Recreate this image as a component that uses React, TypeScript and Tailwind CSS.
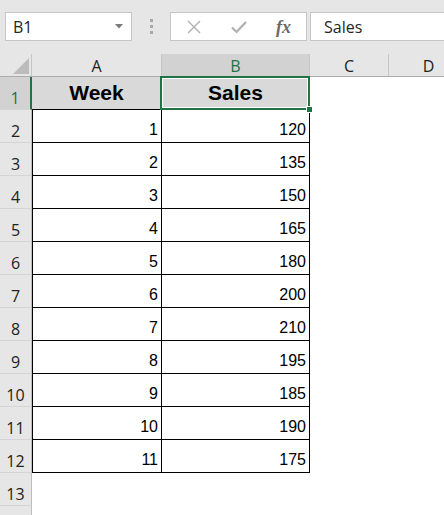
import React from "react";

const rows: [number, number][] = [
  [1, 120],
  [2, 135],
  [3, 150],
  [4, 165],
  [5, 180],
  [6, 200],
  [7, 210],
  [8, 195],
  [9, 185],
  [10, 190],
  [11, 175],
];

const ui = "font-['Open_Sans',sans-serif]";
const cell = "font-['Liberation_Sans',Arial,sans-serif]";

const RowHead = ({ n, active }: { n?: number; active?: boolean }) => (
  <div
    className={`w-[32px] h-[33px] shrink-0 flex items-end justify-center pb-[3px] border-b border-[#d4d4d4] ${
      active
        ? "bg-[#d2d2d2] text-[#217346] border-r-2 border-r-[#217346]"
        : "bg-[#e6e6e6] text-[#222] border-r border-r-[#bdbdbd]"
    } ${ui} text-[16px] leading-[16px]`}
  >
    {n}
  </div>
);

export default function App() {
  return (
    <div className="w-[444px] h-[515px] overflow-hidden bg-white select-none">
      {/* formula bar area */}
      <div className="h-[54px] bg-[#e6e6e6] flex items-start pt-[12px] pl-[5px]">
        <div className="w-[127px] h-[29px] bg-white border border-[#c6c6c6] flex items-center justify-between pl-[7px] pr-[8px]">
          <span className={`${ui} text-[16px] text-[#262626]`}>B1</span>
          <svg width="8" height="5" viewBox="0 0 8 5">
            <path d="M0 0 H8 L4 4.5 Z" fill="#7a7a7a" />
          </svg>
        </div>
        <div className="w-[38px] h-[29px] flex flex-col items-center justify-center gap-[3px]">
          <span className="w-[3px] h-[3px] bg-[#a8a8a8]" />
          <span className="w-[3px] h-[3px] bg-[#a8a8a8]" />
          <span className="w-[3px] h-[3px] bg-[#a8a8a8]" />
        </div>
        <div className="w-[137px] h-[29px] bg-white border border-[#c6c6c6] flex items-center pl-[16px]">
          <svg width="14" height="14" viewBox="0 0 14 14">
            <path d="M1 1 L13 13 M13 1 L1 13" stroke="#b0b0b0" strokeWidth="1.4" />
          </svg>
          <svg className="ml-[30px]" width="16" height="14" viewBox="0 0 16 14">
            <path d="M1 7.5 L5.5 12 L15 2" stroke="#b0b0b0" strokeWidth="2.2" fill="none" />
          </svg>
          <span className="ml-[29px] font-['Liberation_Serif',serif] italic text-[18px] leading-none text-[#6a6a6a] font-semibold">
            fx
          </span>
        </div>
        <div className="flex-1 ml-[3px] h-[29px] bg-white border border-[#c6c6c6] border-r-0 flex items-center pl-[13px]">
          <span className={`${ui} text-[16px] text-[#262626]`}>Sales</span>
        </div>
      </div>

      {/* column headers */}
      <div className={`flex h-[23px] bg-[#e6e6e6] border-b border-[#ababab] ${ui} text-[16px] leading-[16px] text-[#222]`}>
        <div className="w-[32px] shrink-0 border-r border-[#c6c6c6] flex items-end justify-end pr-[2px] pb-[2px]">
          <svg width="16" height="16" viewBox="0 0 16 16">
            <path d="M16 0 V16 H0 Z" fill="#bcbcbc" />
          </svg>
        </div>
        <div className="w-[130px] shrink-0 border-r border-[#c6c6c6] flex items-center justify-center pt-[2px]">A</div>
        <div className="w-[148px] shrink-0 bg-[#d2d2d2] text-[#217346] border-r border-[#c6c6c6] flex items-center justify-center pt-[2px]">
          B
        </div>
        <div className="w-[79px] shrink-0 border-r border-[#c6c6c6] flex items-center justify-center pt-[2px]">C</div>
        <div className="w-[79px] shrink-0 flex items-center justify-center pt-[2px]">D</div>
      </div>

      {/* row 1: headings */}
      <div className="flex">
        <RowHead n={1} active />
        <div
          className={`w-[130px] h-[33px] shrink-0 bg-[#d9d9d9] border-r border-b border-black flex items-center justify-center ${cell} font-bold text-[21px] text-black`}
        >
          Week
        </div>
        <div
          className={`relative w-[148px] h-[33px] shrink-0 bg-[#d9d9d9] border-r border-b border-black flex items-center justify-center ${cell} font-bold text-[21px] text-black`}
        >
          Sales
          <div className="absolute -left-[2px] -top-[1px] -right-[1px] -bottom-[1px] border-2 border-[#217346]">
            <div className="absolute inset-0 border border-white" />
          </div>
          <div className="absolute -right-[4px] -bottom-[4px] w-[7px] h-[7px] bg-[#217346] border border-white" />
        </div>
      </div>

      {rows.map(([w, s], i) => (
        <div key={w} className="flex">
          <RowHead n={i + 2} />
          <div
            className={`w-[130px] h-[33px] shrink-0 border-l border-r border-b border-black flex items-end justify-end pr-[3px] pb-[4px] ${cell} text-[16px] leading-[16px] text-black`}
          >
            {w}
          </div>
          <div
            className={`w-[148px] h-[33px] shrink-0 border-r border-b border-black flex items-end justify-end pr-[3px] pb-[4px] ${cell} text-[16px] leading-[16px] text-black`}
          >
            {s}
          </div>
        </div>
      ))}

      <div className="flex">
        <RowHead n={13} />
      </div>
      <div className="flex">
        <RowHead />
      </div>
    </div>
  );
}
